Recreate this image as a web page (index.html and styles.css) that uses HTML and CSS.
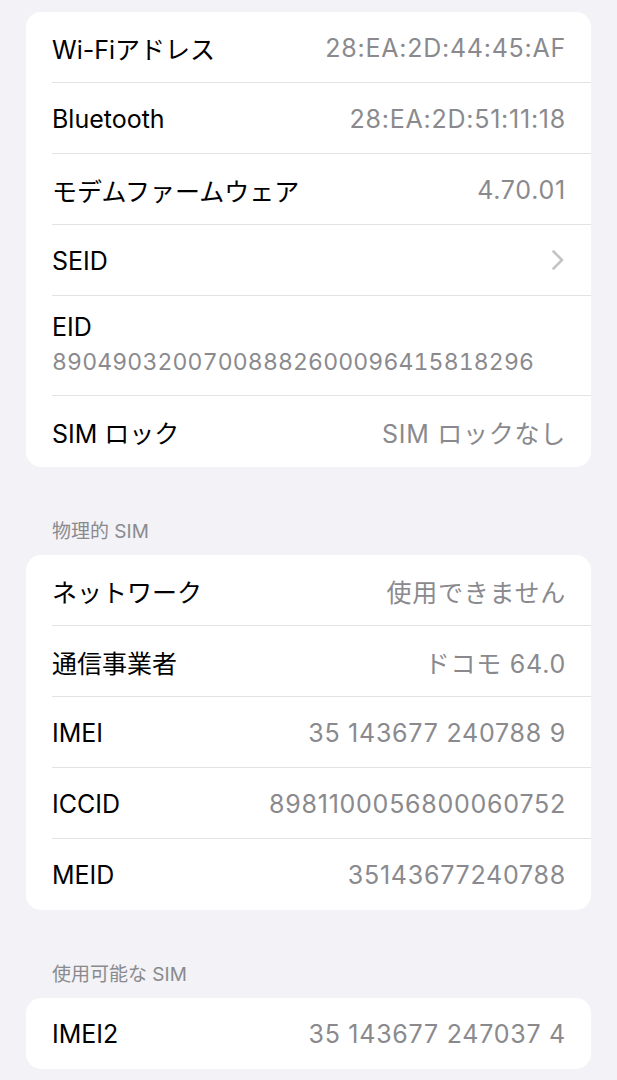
FILE: index.html
```html
<!DOCTYPE html>
<html lang="ja">
<head>
    <meta charset="UTF-8">
    <meta name="viewport" content="width=device-width, initial-scale=1.0">
    <title>情報</title>
    <link rel="stylesheet" href="styles.css">
</head>
<body>

<div class="page">
    <div class="card">
        <div class="row"><div class="row-inner"><span class="label">Wi-Fiアドレス</span><span class="value">28:EA:2D:44:45:AF</span></div></div>
        <div class="row"><div class="row-inner"><span class="label">Bluetooth</span><span class="value">28:EA:2D:51:11:18</span></div></div>
        <div class="row"><div class="row-inner"><span class="label">モデムファームウェア</span><span class="value">4.70.01</span></div></div>
        <div class="row"><div class="row-inner"><span class="label">SEID</span>
            <svg class="chevron" width="14" height="22" viewBox="0 0 14 22"><path d="M2.5 2.5 L11 11 L2.5 19.5" fill="none" stroke="#c4c4c7" stroke-width="2.6" stroke-linecap="round" stroke-linejoin="round"/></svg>
        </div></div>
        <div class="row"><div class="row-inner stacked"><span class="label">EID</span><span class="value mono">89049032007008882600096415818296</span></div></div>
        <div class="row"><div class="row-inner"><span class="label">SIM ロック</span><span class="value">SIM ロックなし</span></div></div>
    </div>

    <div class="section-title">物理的 SIM</div>
    <div class="card">
        <div class="row"><div class="row-inner"><span class="label">ネットワーク</span><span class="value">使用できません</span></div></div>
        <div class="row"><div class="row-inner"><span class="label">通信事業者</span><span class="value">ドコモ 64.0</span></div></div>
        <div class="row"><div class="row-inner"><span class="label">IMEI</span><span class="value">35 143677 240788 9</span></div></div>
        <div class="row"><div class="row-inner"><span class="label">ICCID</span><span class="value">8981100056800060752</span></div></div>
        <div class="row"><div class="row-inner"><span class="label">MEID</span><span class="value">35143677240788</span></div></div>
    </div>

    <div class="section-title">使用可能な SIM</div>
    <div class="card">
        <div class="row"><div class="row-inner"><span class="label">IMEI2</span><span class="value">35 143677 247037 4</span></div></div>
    </div>
</div>

</body>
</html>
```

FILE: styles.css
```css
body {
    margin: 0;
    background-color: #f2f2f7;
    font-family: Inter, "Noto Sans CJK JP", sans-serif;
    color: #000;
}
.page {
    padding: 12px 26px 0;
}
.card {
    background: white;
    border-radius: 15px;
    overflow: hidden;
}
.row {
    padding-left: 26px;
}
.row-inner {
    display: flex;
    justify-content: space-between;
    align-items: center;
    height: 70px;
    padding-right: 25px;
    border-bottom: 1px solid #e3e3e6;
}
.row:last-child .row-inner {
    height: 71px;
    border-bottom: none;
}
.label {
    font-size: 25px;
    padding-top: 1px;
}
.value {
    font-size: 25px;
    padding-top: 1px;
    color: #8a8a8e;
    letter-spacing: 0.75px;
}
.stacked {
    flex-direction: column;
    align-items: flex-start;
    justify-content: flex-start;
    height: auto;
    padding-top: 16px;
    padding-bottom: 18px;
}
.stacked .label {
    line-height: 30px;
    padding-top: 0;
}
.stacked .value {
    line-height: 30px;
    padding-top: 0;
    margin-top: 5px;
}
.mono {
    font-size: 23px;
    font-variant-numeric: tabular-nums;
    letter-spacing: 0.15px;
}
.chevron {
    display: block;
    margin-right: 1px;
}
.section-title {
    padding: 53px 26px 11px;
    font-size: 19px;
    line-height: 24px;
    color: #8a8a8e;
}
```
